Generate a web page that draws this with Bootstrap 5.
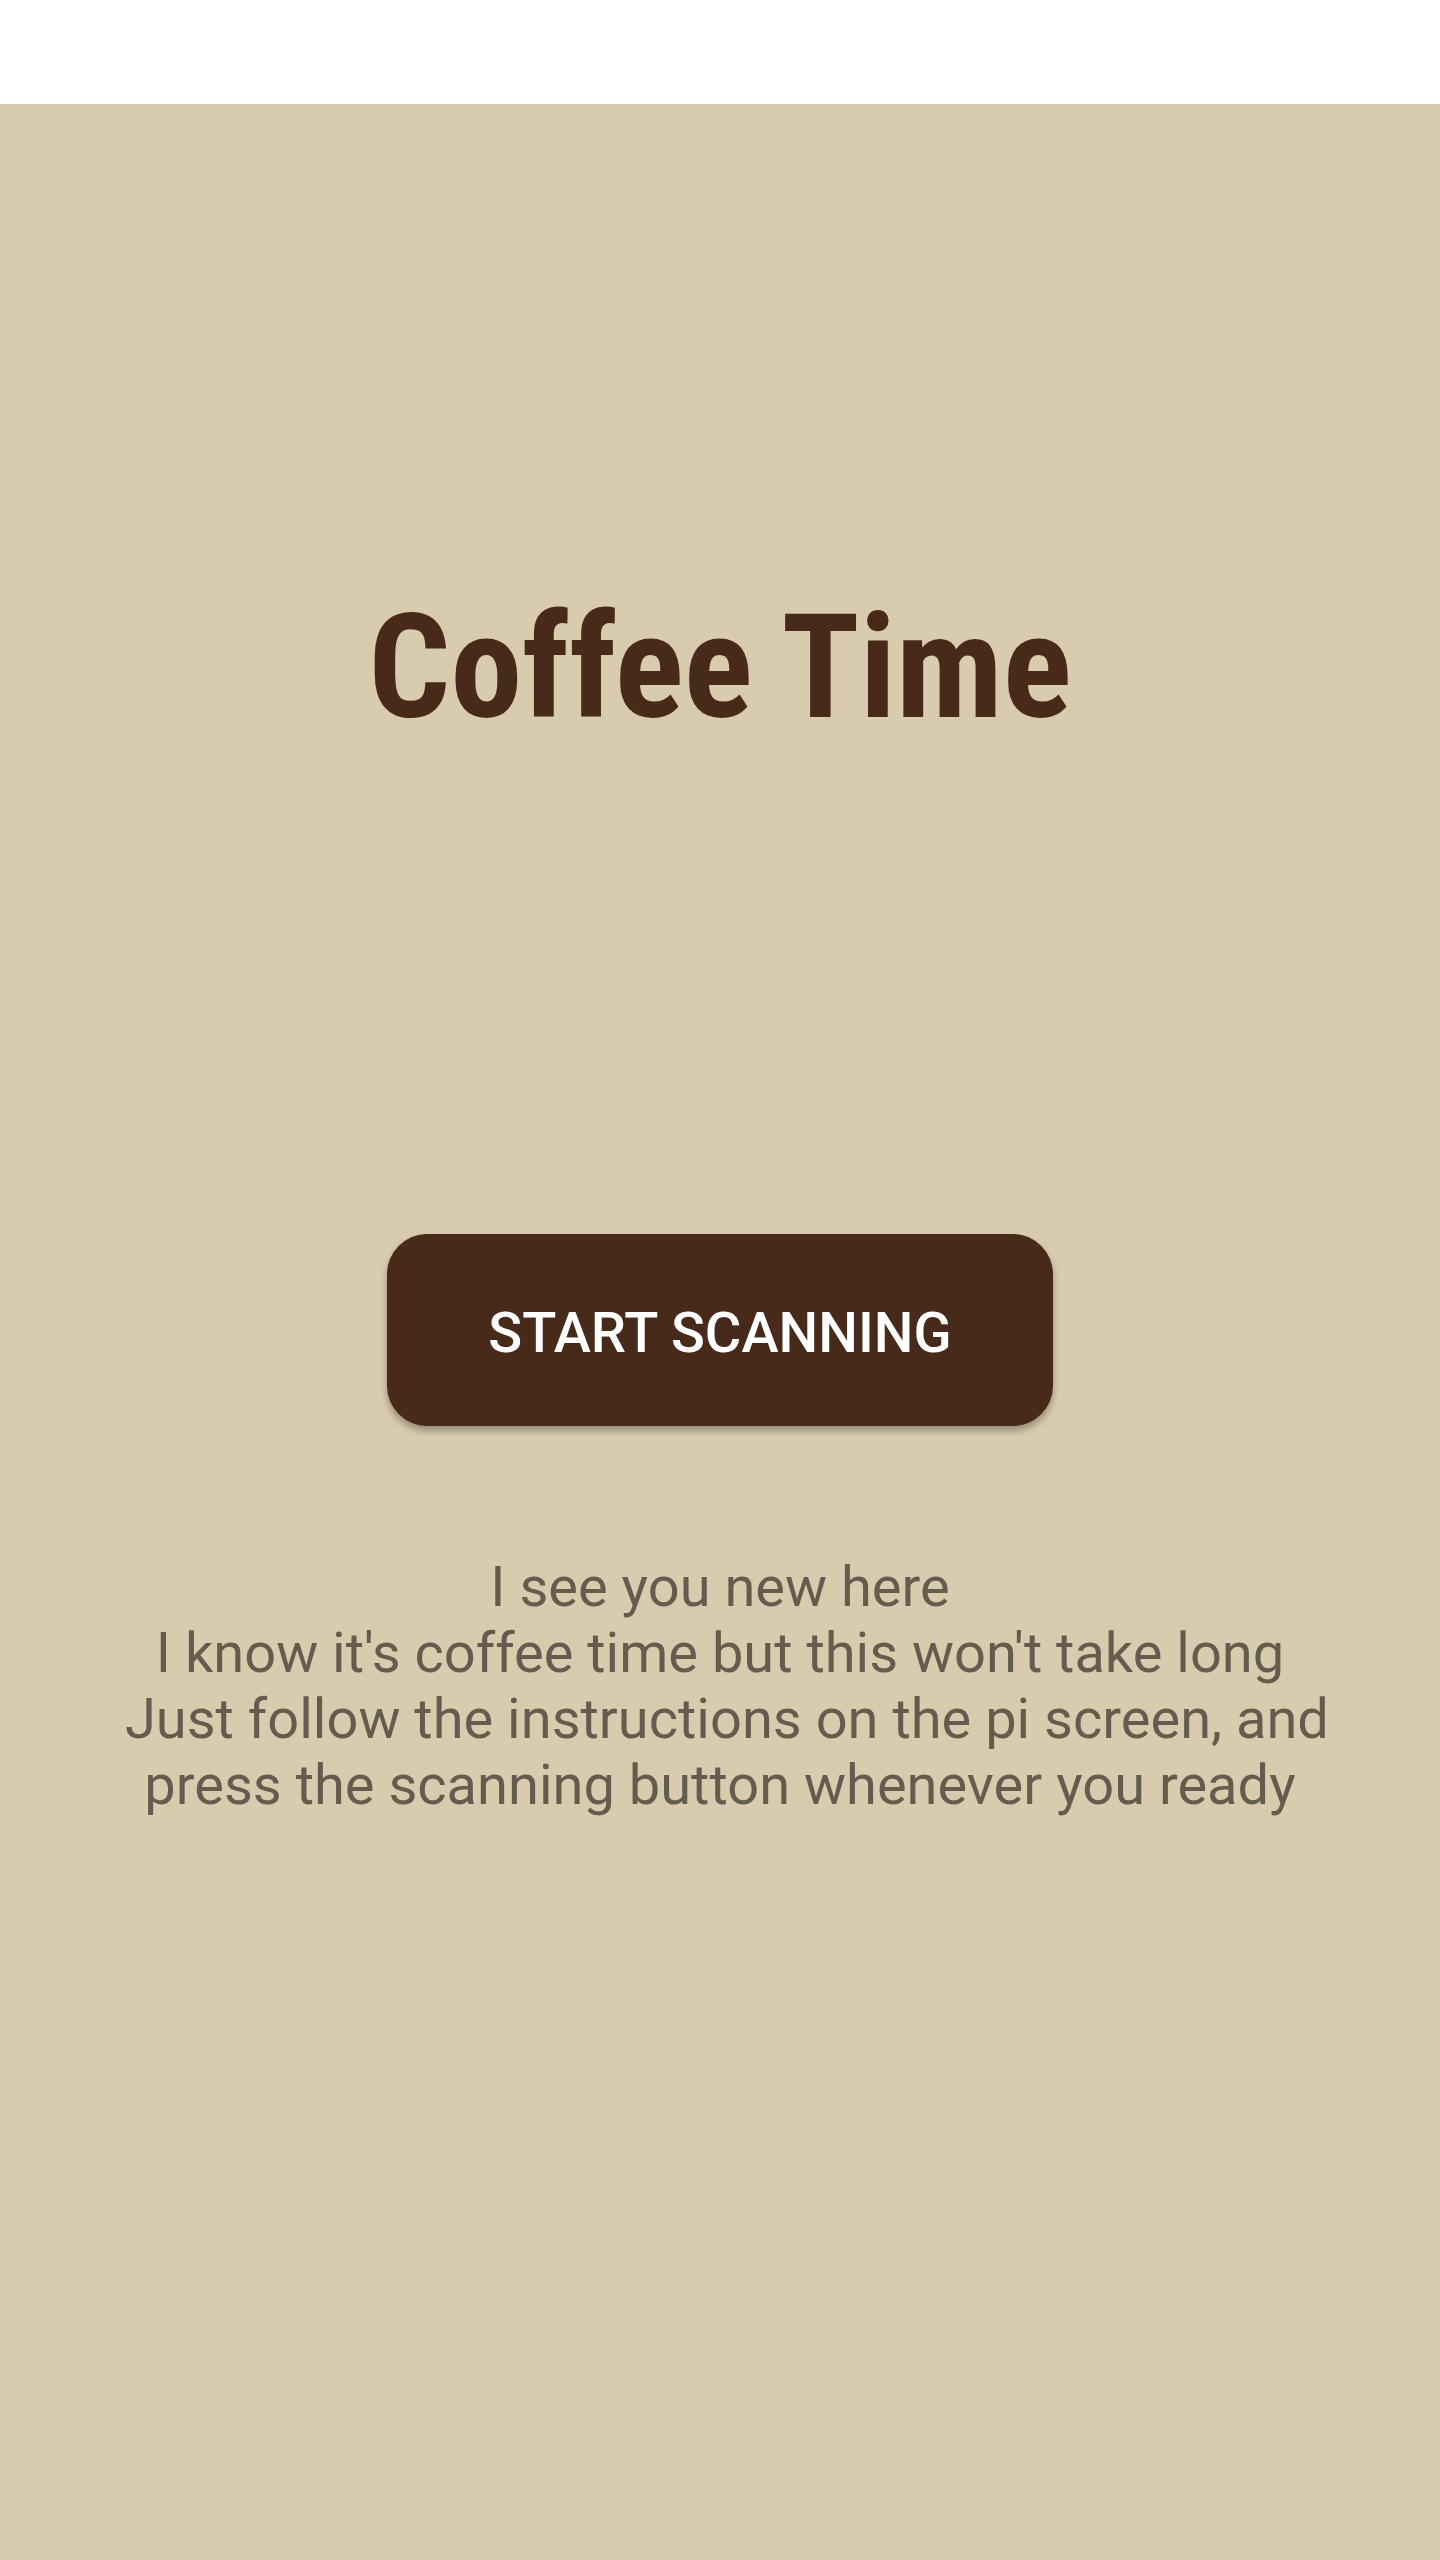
<!DOCTYPE html>
<html lang="en">
<head>
<meta charset="utf-8">
<meta name="viewport" content="width=device-width, initial-scale=1">
<title>Coffee Time</title>
<link href="https://cdn.jsdelivr.net/npm/bootstrap@5.3.0/dist/css/bootstrap.min.css" rel="stylesheet">
<style>
body { font-family: Roboto, sans-serif; }
.status-strip { height: 104px; }
.welcome { background: #d9cbad; padding: 480px 96px 0; }
.app-title { font-family: "Roboto Condensed", Roboto, sans-serif; font-size: 144px; line-height: 168px; font-weight: 700; color: #482a1b; }
.btn-scan { --bs-btn-color: #fff; --bs-btn-bg: #482a1b; --bs-btn-border-color: #482a1b; --bs-btn-hover-color: #fff; --bs-btn-hover-bg: #5a3625; --bs-btn-border-radius: 40px; --bs-btn-font-size: 56px; --bs-btn-line-height: 64px; --bs-btn-font-weight: 500; padding: 66px 100px 60px; margin-top: 482px; box-shadow: 0 5px 7px rgba(0,0,0,.3); }
.intro { font-size: 56px; line-height: 66px; color: rgba(0,0,0,.54); margin-top: 128px; }
</style>
<script src="https://cdn.jsdelivr.net/npm/bootstrap@5.3.0/dist/js/bootstrap.bundle.min.js" defer></script>
</head>
<body class="d-flex flex-column min-vh-100">
<header class="status-strip bg-white"></header>
<main class="welcome flex-grow-1 d-flex flex-column align-items-center text-center">
<h1 class="app-title mb-0">Coffee Time</h1>
<button type="button" class="btn btn-scan text-uppercase">Start scanning</button>
<p class="intro mb-0">I see you new here<br>I know it's coffee time but this won't take long<br>&nbsp;Just follow the instructions on the pi screen, and press the scanning button whenever you ready</p>
</main>
</body>
</html>
